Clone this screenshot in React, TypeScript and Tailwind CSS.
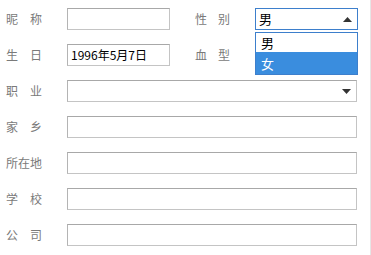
import React from "react";

const font = { fontFamily: '"Noto Sans CJK SC", "Noto Sans", sans-serif' };

function Label2({ a, b, w = "w-[37px]", gap = "ml-[12px]" }: { a: string; b: string; w?: string; gap?: string }) {
  return (
    <div className={`${w} shrink-0 flex text-[12px] leading-none text-[#7a7a7a]`}>
      <span className="shrink-0">{a}</span>
      <span className={`shrink-0 ${gap}`}>{b}</span>
    </div>
  );
}

function Box({ className = "", children }: { className?: string; children?: React.ReactNode }) {
  return (
    <div
      className={`shrink-0 h-[22px] border border-[#c4c4c4] border-t-[#a8a8a8] border-l-[#b4b4b4] bg-white flex items-center ${className}`}
    >
      {children}
    </div>
  );
}

function Down() {
  return (
    <svg width="9" height="5" viewBox="0 0 9 5" className="ml-auto mr-[5px]">
      <polygon points="0,0 9,0 4.5,5" fill="#333" />
    </svg>
  );
}

export default function App() {
  return (
    <div className="w-[371px] h-[255px] bg-white border-r border-[#e6e6e6] relative" style={font}>
      <div className="flex flex-col gap-[14px] pt-[8px] pl-[6px]">
        {/* row 1 */}
        <div className="flex items-center h-[22px]">
          <Label2 a="昵" b="称" />
          <Box className="ml-[24px] w-[103px]" />
          <div className="ml-[25px] shrink-0">
            <Label2 a="性" b="别" w="w-[32px]" gap="ml-[11px]" />
          </div>
          <div className="ml-[28px] relative shrink-0">
            <div className="w-[103px] h-[22px] border border-[#3d7fcc] bg-white flex items-center pl-[3px] text-[13px] text-black">
              男
              <svg width="9" height="5" viewBox="0 0 9 5" className="ml-auto mr-[5px]">
                <polygon points="0,5 9,5 4.5,0" fill="#333" />
              </svg>
            </div>
            <div className="absolute left-0 top-[24px] w-[103px] border border-[#3d7fcc] bg-white text-[13px] leading-none z-10">
              <div className="h-[19px] pl-[5px] flex items-center text-black">男</div>
              <div className="h-[22px] pl-[5px] flex items-center text-white bg-[#3a8dde]">女</div>
            </div>
          </div>
        </div>
        {/* row 2 */}
        <div className="flex items-center h-[22px]">
          <Label2 a="生" b="日" />
          <Box className="ml-[24px] w-[103px] pl-[3px] text-[12px] text-black">1996年5月7日</Box>
          <div className="ml-[25px] shrink-0">
            <Label2 a="血" b="型" w="w-[32px]" gap="ml-[11px]" />
          </div>
        </div>
        {/* row 3 */}
        <div className="flex items-center h-[22px]">
          <Label2 a="职" b="业" />
          <Box className="ml-[24px] w-[290px]">
            <Down />
          </Box>
        </div>
        <div className="flex items-center h-[22px]">
          <Label2 a="家" b="乡" />
          <Box className="ml-[24px] w-[290px]" />
        </div>
        <div className="flex items-center h-[22px]">
          <div className="w-[37px] shrink-0 text-[12px] leading-none text-[#7a7a7a]">所在地</div>
          <Box className="ml-[24px] w-[290px]" />
        </div>
        <div className="flex items-center h-[22px]">
          <Label2 a="学" b="校" />
          <Box className="ml-[24px] w-[290px]" />
        </div>
        <div className="flex items-center h-[22px]">
          <Label2 a="公" b="司" />
          <Box className="ml-[24px] w-[290px]" />
        </div>
      </div>
    </div>
  );
}
